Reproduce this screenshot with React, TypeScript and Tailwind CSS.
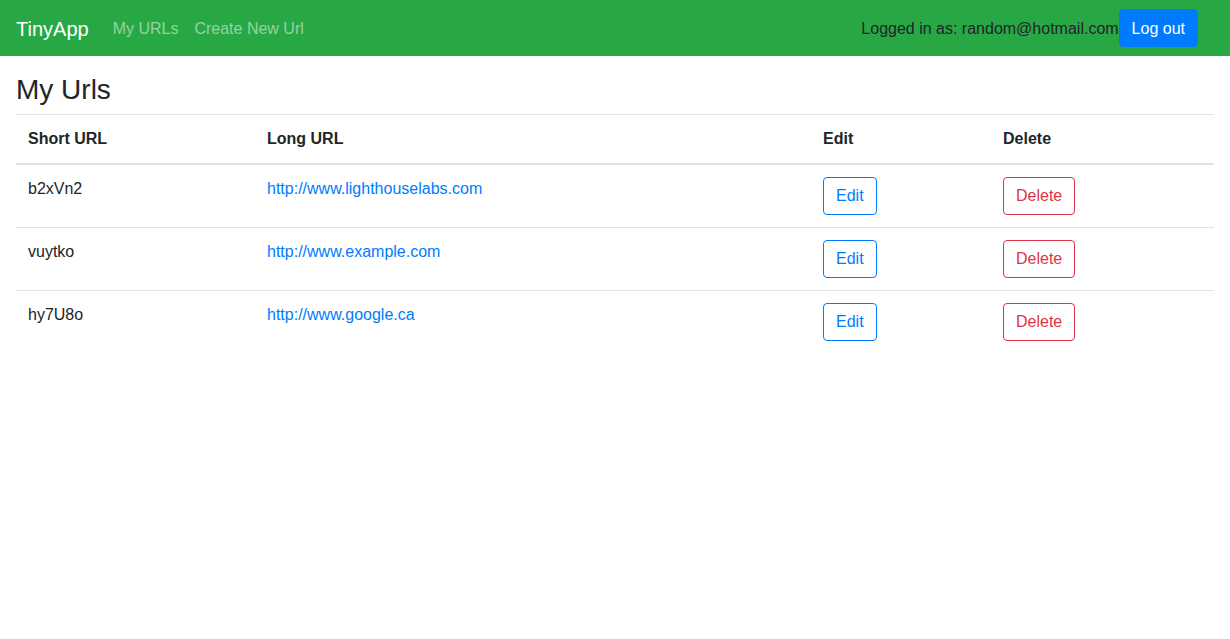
const urls = [
  { short: "b2xVn2", long: "http://www.lighthouselabs.com" },
  { short: "vuytko", long: "http://www.example.com" },
  { short: "hy7U8o", long: "http://www.google.ca" },
];

export default function App() {
  return (
    <div className="min-h-[639px] bg-white font-['Liberation_Sans',Arial,sans-serif] text-base leading-6 text-[#212529]">
      <nav className="flex h-14 items-center bg-[#28a745] pl-4 pr-[32px]">
        <a className="mr-4 mt-[2px] text-xl leading-[30px] text-white" href="#">
          TinyApp
        </a>
        <a className="mt-[2px] px-2 text-[rgba(255,255,255,0.5)]" href="#">
          My URLs
        </a>
        <a className="mt-[2px] px-2 text-[rgba(255,255,255,0.5)]" href="#">
          Create New Url
        </a>
        <span className="ml-auto mt-[2px] text-[#212529]">
          Logged in as: random@hotmail.com
        </span>
        <button
          type="button"
          className="h-[38px] rounded border border-[#007bff] bg-[#007bff] px-3 pt-[2px] text-white"
        >
          Log out
        </button>
      </nav>

      <main className="px-4">
        <h3 className="mt-[17px] mb-[7px] text-[28px] leading-[33.6px] font-medium">
          My Urls
        </h3>
        <table className="w-full border-collapse text-left">
          <thead>
            <tr className="border-t border-b-2 border-t-[#dee2e6] border-b-[#dee2e6]">
              <th className="w-[239px] p-3 align-bottom font-bold">Short URL</th>
              <th className="w-[556px] p-3 align-bottom font-bold">Long URL</th>
              <th className="w-[180px] p-3 align-bottom font-bold">Edit</th>
              <th className="p-3 align-bottom font-bold">Delete</th>
            </tr>
          </thead>
          <tbody>
            {urls.map((u) => (
              <tr key={u.short} className="border-b border-[#dee2e6] last:border-b-0">
                <td className="p-3 align-top">{u.short}</td>
                <td className="p-3 align-top">
                  <a className="text-[#007bff]" href={u.long}>
                    {u.long}
                  </a>
                </td>
                <td className="p-3 align-top">
                  <button
                    type="button"
                    className="h-[38px] rounded border border-[#007bff] px-3 text-[#007bff]"
                  >
                    Edit
                  </button>
                </td>
                <td className="p-3 align-top">
                  <button
                    type="button"
                    className="h-[38px] rounded border border-[#dc3545] px-3 text-[#dc3545]"
                  >
                    Delete
                  </button>
                </td>
              </tr>
            ))}
          </tbody>
        </table>
      </main>
    </div>
  );
}
